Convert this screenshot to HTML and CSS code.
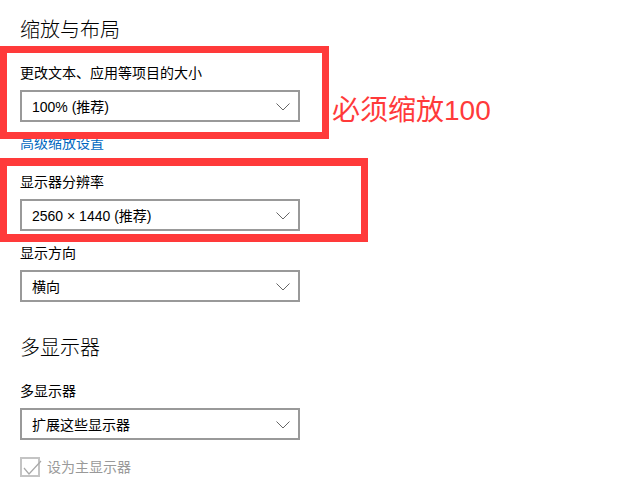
FILE: index.html
```html
<!DOCTYPE html>
<html lang="zh-CN">
<head>
    <meta charset="UTF-8">
    <title>显示设置</title>
    <link rel="stylesheet" href="styles.css">
</head>
<body>

    <div class="page">
        <h2 class="section-title">缩放与布局</h2>

        <div class="field first">
            <label class="field-label">更改文本、应用等项目的大小</label>
            <div class="select">
                <span>100% (推荐)</span>
                <svg class="chevron" width="14" height="8" viewBox="0 0 14 8"><polyline points="0.5,0.5 7,7 13.5,0.5" fill="none" stroke="#666" stroke-width="1"/></svg>
            </div>
        </div>
        <a class="link" href="#">高级缩放设置</a>

        <div class="field after-link">
            <label class="field-label">显示器分辨率</label>
            <div class="select">
                <span>2560 × 1440 (推荐)</span>
                <svg class="chevron" width="14" height="8" viewBox="0 0 14 8"><polyline points="0.5,0.5 7,7 13.5,0.5" fill="none" stroke="#666" stroke-width="1"/></svg>
            </div>
        </div>

        <div class="field">
            <label class="field-label">显示方向</label>
            <div class="select">
                <span>横向</span>
                <svg class="chevron" width="14" height="8" viewBox="0 0 14 8"><polyline points="0.5,0.5 7,7 13.5,0.5" fill="none" stroke="#666" stroke-width="1"/></svg>
            </div>
        </div>

        <h2 class="section-title second">多显示器</h2>

        <div class="field first">
            <label class="field-label">多显示器</label>
            <div class="select">
                <span>扩展这些显示器</span>
                <svg class="chevron" width="14" height="8" viewBox="0 0 14 8"><polyline points="0.5,0.5 7,7 13.5,0.5" fill="none" stroke="#666" stroke-width="1"/></svg>
            </div>
        </div>

        <div class="check disabled">
            <span class="check-box">
                <svg width="22" height="18" viewBox="0 0 22 18"><polyline points="2,9 7,15 19,2" fill="none" stroke="#a8a8a8" stroke-width="1.2"/></svg>
            </span>
            <span>设为主显示器</span>
        </div>
    </div>

    <!-- annotations drawn over the screenshot -->
    <div class="mark mark-scale"></div>
    <div class="mark mark-res"></div>
    <div class="note">必须缩放100</div>

</body>
</html>
```

FILE: styles.css
```css
body { margin: 0; font-family: "Liberation Sans", "Noto Sans CJK SC", sans-serif; color: #000; background: #fff; position: relative; height: 500px; overflow: hidden; }
.page { padding-left: 20px; padding-top: 16px; }
.section-title { margin: 0; font-size: 20px; font-weight: 300; line-height: 28px; }
.section-title.second { margin-top: 32px; }
.field { margin-top: 12px; }
.field.first { margin-top: 19px; }
.field.after-link { margin-top: 19px; }
.field-label { display: block; font-size: 14px; line-height: 20px; margin-bottom: 7px; }
.select { width: 280px; height: 32px; box-sizing: border-box; border: 2px solid #999; display: flex; align-items: center; justify-content: space-between; padding: 0 8px 0 10px; font-size: 14px; }
.chevron { display: block; margin-top: 1px; }
.link { display: block; margin-top: 11px; font-size: 14px; line-height: 20px; color: #0067c0; text-decoration: none; }
.check { display: flex; align-items: center; gap: 7px; margin-top: 17px; font-size: 14px; line-height: 20px; }
.check.disabled { color: #999; }
.check-box { width: 20px; height: 20px; box-sizing: border-box; border: 2px solid #c4c4c4; position: relative; }
.check-box svg { position: absolute; left: 0; top: 0; }
.mark { position: absolute; border: 7px solid #ff3a3a; box-sizing: border-box; }
.mark-scale { left: 0; top: 46px; width: 329px; height: 93px; }
.mark-res { left: 0; top: 158px; width: 368px; height: 84px; border-width: 8px 7px; }
.note { position: absolute; left: 332px; top: 92px; font-size: 28px; line-height: 38px; color: #ff3a3a; font-family: "Liberation Sans", "Noto Sans CJK SC", sans-serif; }
```
